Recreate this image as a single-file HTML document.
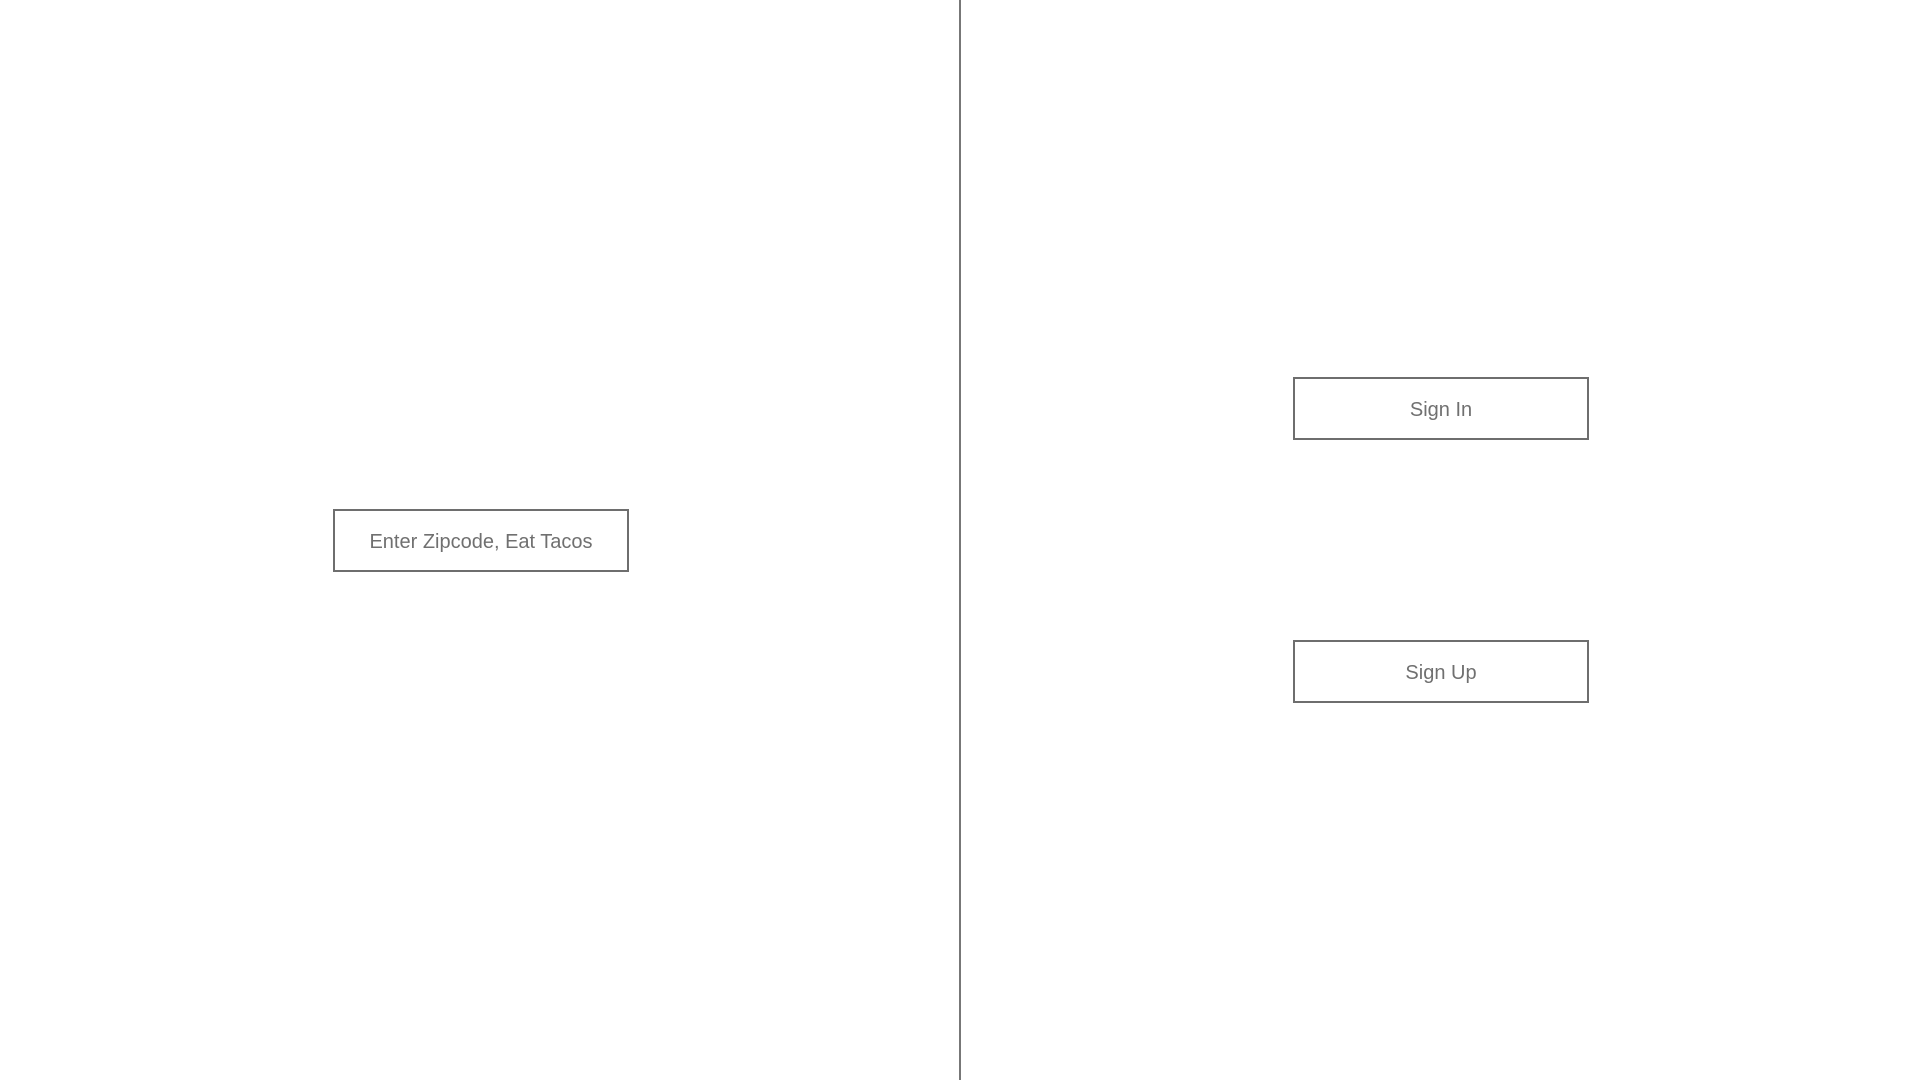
<!DOCTYPE html>
<html><head><style>
body{margin:0;width:1920px;height:1080px;background:#fff;position:relative;overflow:hidden;font-family:"Liberation Sans",Arial,sans-serif}
.b{position:absolute;box-sizing:border-box;border:2.5px solid #6e6e6e;display:flex;align-items:center;justify-content:center;color:#707070;font-size:20px;padding-top:4px}
.l{position:absolute;left:959px;top:0;width:2px;height:1080px;background:#777}
</style></head><body>
<div class="l"></div>
<div class="b" style="left:333px;top:509px;width:296px;height:63px">Enter Zipcode, Eat Tacos</div>
<div class="b" style="left:1293px;top:377px;width:296px;height:63px">Sign In</div>
<div class="b" style="left:1293px;top:640px;width:296px;height:63px">Sign Up</div>
</body></html>
